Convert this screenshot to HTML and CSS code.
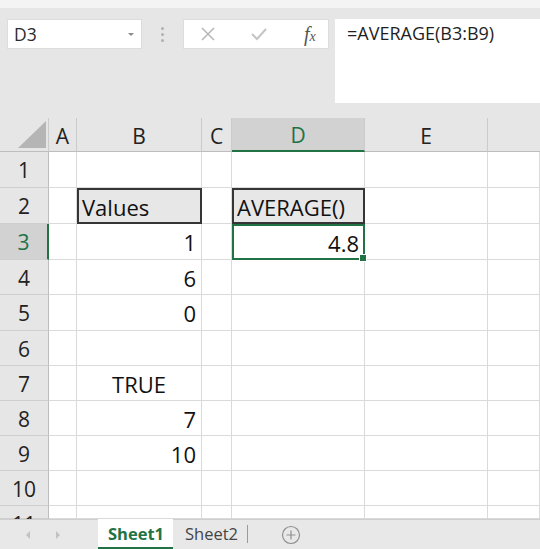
FILE: index.html
```html
<!DOCTYPE html>
<html>
<head>
<meta charset="utf-8">
<link rel="stylesheet" href="styles.css">
</head>
<body>
<div class="app">
  <div class="topstrip"></div>
  <div class="fbar">
    <div class="namebox">
      <span class="nb-text">D3</span>
      <svg class="nb-caret" width="8" height="5" viewBox="0 0 8 5"><path d="M1 1 L4 4 L7 1 Z" fill="#8a8a8a"/></svg>
    </div>
    <div class="vdots"><span></span><span></span><span></span></div>
    <div class="fbtns">
      <svg class="ico" width="16" height="16" viewBox="0 0 16 16"><path d="M2 2 L14 14 M14 2 L2 14" stroke="#b8b8b8" stroke-width="1.6" fill="none"/></svg>
      <svg class="ico" width="18" height="16" viewBox="0 0 18 16"><path d="M2 8 L7 13 L16 3" stroke="#c4c4c4" stroke-width="2" fill="none"/></svg>
      <span class="fx">f<span class="fx-x">x</span></span>
    </div>
    <div class="finput">=AVERAGE(B3:B9)</div>
  </div>
  <div class="sheet">
    <div class="hd corner"><svg width="28" height="27" viewBox="0 0 28 27"><path d="M28 0 L28 27 L0 27 Z" fill="#b5b5b5"/></svg></div>
    <div class="hd col">A</div>
    <div class="hd col">B</div>
    <div class="hd col">C</div>
    <div class="hd col sel-col">D</div>
    <div class="hd col">E</div>
    <div class="hd col last"></div>

    <div class="hd row">1</div><div class="c"></div><div class="c"></div><div class="c"></div><div class="c"></div><div class="c"></div><div class="c"></div>

    <div class="hd row">2</div><div class="c"></div><div class="c boxed">Values</div><div class="c"></div><div class="c boxed">AVERAGE()</div><div class="c"></div><div class="c"></div>

    <div class="hd row sel-row">3</div><div class="c"></div><div class="c num">1</div><div class="c"></div><div class="c num active">4.8</div><div class="c"></div><div class="c"></div>

    <div class="hd row">4</div><div class="c"></div><div class="c num">6</div><div class="c"></div><div class="c"></div><div class="c"></div><div class="c"></div>

    <div class="hd row">5</div><div class="c"></div><div class="c num">0</div><div class="c"></div><div class="c"></div><div class="c"></div><div class="c"></div>

    <div class="hd row">6</div><div class="c"></div><div class="c"></div><div class="c"></div><div class="c"></div><div class="c"></div><div class="c"></div>

    <div class="hd row">7</div><div class="c"></div><div class="c bool">TRUE</div><div class="c"></div><div class="c"></div><div class="c"></div><div class="c"></div>

    <div class="hd row">8</div><div class="c"></div><div class="c num">7</div><div class="c"></div><div class="c"></div><div class="c"></div><div class="c"></div>

    <div class="hd row">9</div><div class="c"></div><div class="c num">10</div><div class="c"></div><div class="c"></div><div class="c"></div><div class="c"></div>

    <div class="hd row">10</div><div class="c"></div><div class="c"></div><div class="c"></div><div class="c"></div><div class="c"></div><div class="c"></div>

    <div class="hd row cut">11</div><div class="c"></div><div class="c"></div><div class="c"></div><div class="c"></div><div class="c"></div><div class="c"></div>
  </div>
  <div class="tabbar">
    <div class="navs">
      <svg width="6" height="10" viewBox="0 0 6 10"><path d="M5 1 L1 5 L5 9 Z" fill="#c2c2c2"/></svg>
      <svg width="6" height="10" viewBox="0 0 6 10"><path d="M1 1 L5 5 L1 9 Z" fill="#c2c2c2"/></svg>
    </div>
    <div class="tab active-tab">Sheet1</div>
    <div class="tab">Sheet2</div>
    <div class="tabsep"></div>
    <svg class="plus" width="20" height="20" viewBox="0 0 20 20"><circle cx="10" cy="10" r="8.5" stroke="#8f8f8f" stroke-width="1.2" fill="none"/><path d="M10 5.5 V14.5 M5.5 10 H14.5" stroke="#8f8f8f" stroke-width="1.2"/></svg>
  </div>
</div>
</body>
</html>
```

FILE: styles.css
```css
* { box-sizing: border-box; }
html, body { margin: 0; padding: 0; }
body {
  width: 540px;
  height: 549px;
  overflow: hidden;
  background: #e6e6e6;
  font-family: "Open Sans", "Noto Sans", sans-serif;
}
.app {
  width: 540px;
  height: 549px;
  display: flex;
  flex-direction: column;
}
.topstrip {
  height: 8px;
  background: #f4f4f4;
  box-shadow: 0 1px 2px rgba(0,0,0,0.12);
  flex: none;
}
.fbar {
  height: 110px;
  flex: none;
  display: flex;
  align-items: flex-start;
  padding: 11px 0 0 7px;
  background: #e6e6e6;
}
.namebox {
  width: 135px;
  height: 30px;
  background: #fff;
  display: flex;
  align-items: center;
  justify-content: space-between;
  padding: 0 6px 0 6px;
  border: 1px solid #dcdcdc;
}
.nb-text { font-size: 17.5px; color: #2b2b2b; }
.vdots {
  width: 41px;
  height: 30px;
  display: flex;
  flex-direction: column;
  align-items: center;
  justify-content: center;
  gap: 3px;
}
.vdots span {
  width: 3px; height: 3px; border-radius: 50%; background: #b0b0b0;
}
.fbtns {
  width: 146px;
  height: 30px;
  background: #fff;
  border: 1px solid #dcdcdc;
  display: flex;
  align-items: center;
  padding: 0 0 0 16px;
}
.fbtns .ico:first-child { margin-right: 34px; }
.fbtns .ico:nth-child(2) { margin-right: 36px; }
.fx {
  font-family: "Liberation Serif", "DejaVu Serif", serif;
  font-style: italic;
  font-size: 20px;
  color: #555;
}
.fx-x { font-size: 14px; }
.finput {
  margin-left: 6px;
  width: 205px;
  height: 84px;
  background: #fff;
  font-size: 18px;
  color: #1f1f1f;
  padding: 2px 0 0 12px;
}
.sheet {
  flex: none;
  height: 401px;
  display: grid;
  grid-template-columns: 49px 28px 125px 30px 133px 123px 52px;
  grid-template-rows: 34px 36px 36px 36px 35px 36px 35px 35px 35px 35px 35px 13px;
  background: #fff;
  overflow: hidden;
  font-size: 22px;
}
.hd {
  background: #e6e6e6;
  color: #222;
  display: flex;
  align-items: center;
  justify-content: center;
  font-size: 21px;
}
.col {
  border-right: 1px solid #cbcbcb;
  border-bottom: 1px solid #bdbdbd;
  padding-top: 2px;
}
.col.last { border-right: none; }
.corner {
  border-right: 1px solid #cbcbcb;
  border-bottom: 1px solid #bdbdbd;
  align-items: flex-end;
  justify-content: flex-end;
  padding: 0 2px 3px 0;
}
.corner svg { display: block; }
.row {
  border-right: 1px solid #bdbdbd;
  border-bottom: 1px solid #cfcfcf;
  font-size: 21px;
  padding-top: 1px;
}
.row.cut { align-items: flex-start; padding-top: 4px; }
.sel-col {
  background: #d2d2d2;
  color: #217346;
  border-bottom: 2px solid #217346;
}
.sel-row {
  background: #d2d2d2;
  color: #217346;
  border-right: 2px solid #217346;
}
.c {
  border-right: 1px solid #dadada;
  border-bottom: 1px solid #dadada;
  display: flex;
  align-items: center;
  color: #111;
  white-space: nowrap;
  padding: 1px 5px 0 5px;
}
.boxed {
  background: #e7e7e7;
  border: 2px solid #353535;
  padding: 1px 3px 0 3px;
  justify-content: flex-start;
}
.num { justify-content: flex-end; padding-right: 5px; }
.bool { justify-content: center; }
.active {
  border: 2px solid #217346;
  position: relative;
  padding-right: 4px;
}
.active::after {
  content: "";
  position: absolute;
  right: -4px;
  bottom: -4px;
  width: 6px;
  height: 6px;
  background: #217346;
  border: 1px solid #fff;
}
.tabbar {
  flex: none;
  height: 30px;
  background: #e8e8e8;
  border-top: 1px solid #cfcfcf;
  display: flex;
  align-items: stretch;
}
.navs {
  width: 98px;
  display: flex;
  align-items: center;
  gap: 24px;
  padding-left: 25px;
}
.tab {
  display: flex;
  align-items: center;
  font-size: 16.5px;
  color: #444;
  padding: 0 9px 2px 12px;
}
.active-tab {
  width: 75px;
  background: #fff;
  color: #217346;
  font-weight: 700;
  border-bottom: 2px solid #217346;
  padding: 0 0 0 10px;
  margin-top: -1px;
}
.tabsep {
  width: 1px;
  background: #9a9a9a;
  margin: 5px 0 6px 0;
}
.plus { align-self: center; margin-left: 33px; }
```
